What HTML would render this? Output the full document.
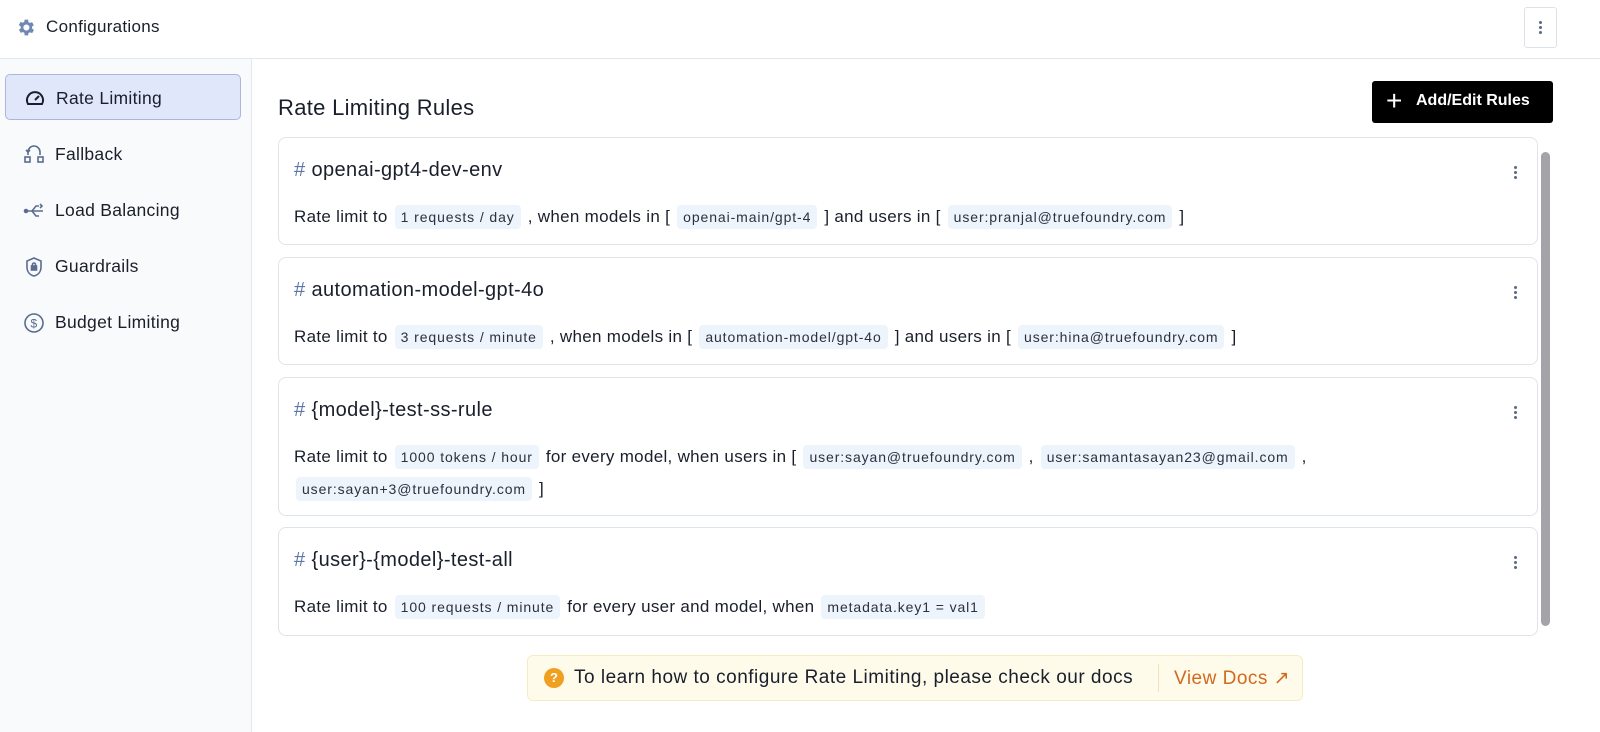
<!DOCTYPE html>
<html><head><meta charset="utf-8"><style>
*{box-sizing:border-box;margin:0;padding:0}
body{width:1600px;height:732px;overflow:hidden;background:#fff;font-family:"Liberation Sans",sans-serif;color:#1a1f2b;position:relative}
.hdr{position:absolute;left:0;top:0;width:1600px;height:59px;border-bottom:1px solid #e3e7ee;background:#fff}
.hdr .t{position:absolute;left:46px;top:17px;font-size:17px;letter-spacing:0.3px}
.kb{position:absolute;left:1524px;top:7px;width:33px;height:41px;border:1px solid #dde2ea;border-radius:3px}
.side{position:absolute;left:0;top:59px;width:252px;height:673px;background:#f8fafc;border-right:1px solid #e3e7ee}
.item{position:absolute;left:5px;width:236px;height:46px;font-size:17.5px;letter-spacing:0.3px;padding:13px 0 0 50px}
.item.act{background:#e0e7fb;border:1px solid #aab6dc;border-radius:5px}
.item svg{position:absolute;left:18px;top:13px}
h1{position:absolute;left:278px;top:95px;font-size:22px;font-weight:normal;letter-spacing:0.3px}
.btn{position:absolute;left:1372px;top:81px;width:181px;height:42px;background:#000;border-radius:3px;color:#fff;font-weight:bold;font-size:16px;padding:11px 0 0 44px}
.btn:before{content:"+";position:absolute;left:14px;top:4px;font-size:28px;font-weight:normal}
.card{position:absolute;left:278px;width:1260px;border:1px solid #dfe3ea;border-radius:8px;background:#fff}
.card .ti{position:absolute;left:15px;top:21px;font-size:20px;letter-spacing:0.4px}
.card .ti b{color:#5a77a6;font-weight:normal}
.card .bd{position:absolute;left:15px;top:63px;font-size:17px;letter-spacing:0.3px;line-height:32px;width:1220px}
.c{background:#eef4fb;border-radius:4px;padding:4px 6px;font-size:14px;letter-spacing:0.9px;color:#2a3140;margin:0 2px}
.dots{position:absolute;right:20px;top:28px;width:3px}
.dots i{display:block;width:3px;height:3px;border-radius:50%;background:#5b6a85;margin-bottom:2px}
.sb{position:absolute;left:1540px;top:140px;width:12px;height:500px}
.sb .th{position:absolute;left:1px;top:12px;width:9px;height:474px;background:#a3a3a8;border-radius:5px}
.ban{position:absolute;left:527px;top:655px;width:776px;height:46px;background:#fefbeb;border:1px solid #f6ecc4;border-radius:6px;font-size:19px;letter-spacing:0.5px}
</style></head><body>
<div class="hdr">
<svg style="position:absolute;left:15px;top:17px" width="21" height="21" viewBox="0 0 24 24"><path fill="#6f89b4" d="M19.4 13a7.5 7.5 0 0 0 0-2l2.1-1.6-2-3.5-2.5 1a7.5 7.5 0 0 0-1.700-1L15 3h-4l-.4 2.6a7.5 7.5 0 0 0-1.7 1l-2.500-1-2 3.5L6.6 11a7.5 7.5 0 0 0 0 2l-2.1 1.6 2 3.5 2.5-1a7.5 7.5 0 0 0 1.7 1L11 21h4l.4-2.6a7.5 7.5 0 0 0 1.7-1l2.5 1 2-3.5zM13 15.5a3.5 3.5 0 1 1 0-7 3.5 3.5 0 0 1 0 7z"/></svg>
<div class="t">Configurations</div>
<div class="kb"><div class="dots" style="right:14px;top:13px"><i></i><i></i><i></i></div></div>
</div>
<div class="side">
<div class="item act" style="top:15px"><svg width="22" height="20" viewBox="0 0 22 20" fill="none" stroke="#1a1f2b" stroke-width="2"><path d="M4 16a8 8 0 1 1 14 0z"/><path d="M11 12l4-4"/></svg>Rate Limiting</div>
<div class="item" style="top:72px"><svg width="22" height="22" viewBox="0 0 22 22" fill="none" stroke="#5a6d8f" stroke-width="1.6"><path d="M5 11V8a6 6 0 0 1 12 0v3"/><path d="M3 6l2 2 2-2"/><rect x="2" y="13" width="5" height="5"/><rect x="15" y="13" width="5" height="5"/></svg>Fallback</div>
<div class="item" style="top:128px"><svg width="22" height="22" viewBox="0 0 22 22" fill="none" stroke="#5a6d8f" stroke-width="1.6"><circle cx="3" cy="11" r="1.5" fill="#5a6d8f"/><path d="M4 11h16M9 11l4-5h3M9 11l4 5h3M17 4l2 2-2 2"/></svg>Load Balancing</div>
<div class="item" style="top:184px"><svg width="22" height="22" viewBox="0 0 22 22" fill="none" stroke="#5a6d8f" stroke-width="1.6"><path d="M11 2l7 3v6c0 5-3 8-7 9-4-1-7-4-7-9V5z"/><rect x="8.5" y="10" width="5" height="4" fill="#5a6d8f"/><path d="M9.5 10V8.5a1.5 1.5 0 0 1 3 0V10"/></svg>Guardrails</div>
<div class="item" style="top:240px"><svg width="22" height="22" viewBox="0 0 22 22" fill="none" stroke="#5a6d8f" stroke-width="1.6"><circle cx="11" cy="11" r="9"/><text x="11" y="15.5" font-size="12" text-anchor="middle" fill="#5a6d8f" stroke="none" font-family="Liberation Sans">$</text></svg>Budget Limiting</div>
</div>
<h1>Rate Limiting Rules</h1>
<div class="btn">Add/Edit Rules</div>
<div class="card" style="top:137px;height:108px"><div class="ti"><b>#</b> openai-gpt4-dev-env</div><div class="dots"><i></i><i></i><i></i></div>
<div class="bd">Rate limit to <span class="c">1 requests / day</span> , when models in [ <span class="c">openai-main/gpt-4</span> ] and users in [ <span class="c">user:pranjal@truefoundry.com</span> ]</div></div>
<div class="card" style="top:257px;height:108px"><div class="ti"><b>#</b> automation-model-gpt-4o</div><div class="dots"><i></i><i></i><i></i></div>
<div class="bd">Rate limit to <span class="c">3 requests / minute</span> , when models in [ <span class="c">automation-model/gpt-4o</span> ] and users in [ <span class="c">user:hina@truefoundry.com</span> ]</div></div>
<div class="card" style="top:377px;height:139px"><div class="ti"><b>#</b> {model}-test-ss-rule</div><div class="dots"><i></i><i></i><i></i></div>
<div class="bd">Rate limit to <span class="c">1000 tokens / hour</span> for every model, when users in [ <span class="c">user:sayan@truefoundry.com</span> , <span class="c">user:samantasayan23@gmail.com</span> ,<br><span class="c">user:sayan+3@truefoundry.com</span> ]</div></div>
<div class="card" style="top:527px;height:109px"><div class="ti"><b>#</b> {user}-{model}-test-all</div><div class="dots"><i></i><i></i><i></i></div>
<div class="bd">Rate limit to <span class="c">100 requests / minute</span> for every user and model, when <span class="c">metadata.key1 = val1</span></div></div>
<div class="sb"><div class="th"></div></div>
<div class="ban">
<div style="position:absolute;left:16px;top:12px;width:20px;height:20px;border-radius:50%;background:#f0a020;color:#fff;font-size:13px;font-weight:bold;text-align:center;line-height:20px;letter-spacing:0">?</div>
<div style="position:absolute;left:46px;top:11px">To learn how to configure Rate Limiting, please check our docs</div>
<div style="position:absolute;left:630px;top:8px;width:1px;height:28px;background:#f0e2b8"></div>
<div style="position:absolute;left:646px;top:11px;color:#d2691e">View Docs ↗</div>
</div>
</body></html>
